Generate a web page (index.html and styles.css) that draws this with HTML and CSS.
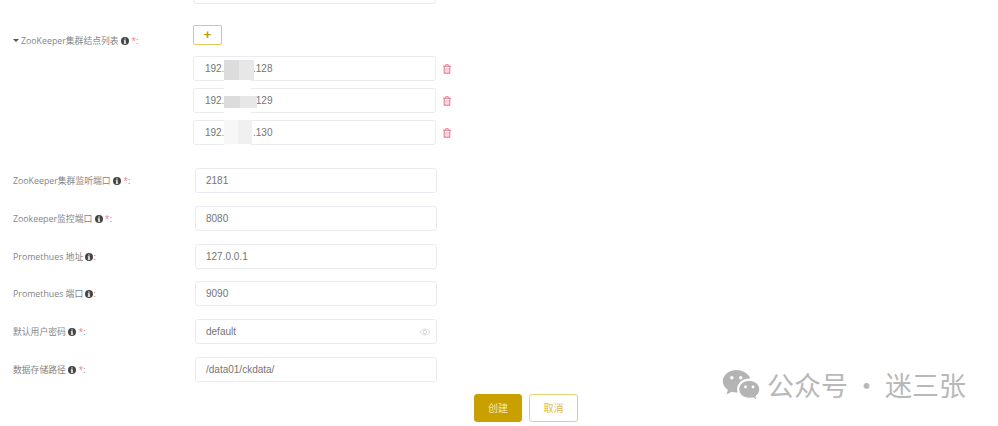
FILE: index.html
```html
<!DOCTYPE html>
<html>
  <head>
    <title>创建集群</title>
    <link rel="stylesheet" href="styles.css">
  </head>
  <body>
    <svg class="icon-defs" width="0" height="0">
      <symbol id="info" viewBox="0 0 16 16">
        <path fill-rule="evenodd" d="M8 0a8 8 0 1 0 0 16A8 8 0 0 0 8 0zM6.6 2.8h2.8v2.400H6.600zM5.600 6.600h3.800v5h1v1.800H5.600v-1.800h1V8.400h-1z"/>
      </symbol>
      <symbol id="trash" viewBox="0 0 12 14">
        <path fill-rule="evenodd" d="M4 0h4l1 2h3v1.600h-1V13a1 1 0 0 1-1 1H2a1 1 0 0 1-1-1V3.600H0V2h3zM4.800 1.200 4.400 2h3.200l-.4-.8zM2.600 3.600v8.800h6.800V3.600zM4 5h1v6H4zm3 0h1v6H7z"/>
      </symbol>
    </svg>

    <div class="form">
      <div class="cut-row"><div class="input-cut"></div></div>

      <div class="row row-nodes">
        <label class="label label-nodes">
          <span class="caret"></span>ZooKeeper集群结点列表
          <svg class="info"><use href="#info"/></svg>
          <span class="req">*</span>:
        </label>
        <div class="nodes">
          <button class="btn-add">+</button>
          <div class="node"><div class="input">192.1<span class="gap"></span>.128</div><svg class="trash"><use href="#trash"/></svg></div>
          <div class="node"><div class="input">192.1<span class="gap"></span>.129</div><svg class="trash"><use href="#trash"/></svg></div>
          <div class="node"><div class="input">192.1<span class="gap"></span>.130</div><svg class="trash"><use href="#trash"/></svg></div>
        </div>
      </div>

      <div class="row">
        <label class="label">ZooKeeper集群监听端口 <svg class="info"><use href="#info"/></svg> <span class="req">*</span>:</label>
        <div class="input">2181</div>
      </div>
      <div class="row">
        <label class="label">Zookeeper监控端口 <svg class="info"><use href="#info"/></svg> <span class="req">*</span>:</label>
        <div class="input">8080</div>
      </div>
      <div class="row">
        <label class="label">Promethues 地址 <svg class="info"><use href="#info"/></svg>:</label>
        <div class="input">127.0.0.1</div>
      </div>
      <div class="row">
        <label class="label">Promethues 端口 <svg class="info"><use href="#info"/></svg>:</label>
        <div class="input">9090</div>
      </div>
      <div class="row">
        <label class="label">默认用户密码 <svg class="info"><use href="#info"/></svg> <span class="req">*</span>:</label>
        <div class="input input-pass">default
          <svg class="eye" viewBox="0 0 16 12"><path d="M.8 6C2.600 2.800 5 1.200 8 1.200s5.400 1.600 7.200 4.800C13.400 9.200 11 10.800 8 10.800S2.600 9.200.8 6z"/><circle cx="8" cy="6" r="2.800"/></svg>
        </div>
      </div>
      <div class="row">
        <label class="label">数据存储路径 <svg class="info"><use href="#info"/></svg> <span class="req">*</span>:</label>
        <div class="input">/data01/ckdata/</div>
      </div>

      <div class="actions">
        <button class="btn btn-primary">创建</button>
        <button class="btn btn-ghost">取消</button>
      </div>
    </div>

    <!-- mosaic over the hidden part of the addresses -->
    <div class="patch"></div>
    <div class="smudge smudge-1"></div>
    <div class="smudge smudge-2"></div>
    <div class="smudge smudge-3"></div>

    <div class="watermark">
      <svg class="wechat" viewBox="0 0 38 32">
        <path d="M14.500 1C6.800 1 .8 6 .8 12.300c0 3.500 1.900 6.500 5 8.600L4.400 25.500l5.200-2.800c1.600.5 3.200.7 4.900.7h1.100a10.500 10.500 0 0 1-.5-3.100c0-6 5.500-10.700 12.300-10.700h.9C26.600 4.700 21 1 14.500 1z"/>
        <path d="M27.200 11.400c-5.800 0-10.400 4-10.400 8.900s4.600 8.900 10.400 8.900c1.200 0 2.400-.2 3.500-.5l4.200 2.300-1.100-3.800c2.400-1.700 3.900-4.200 3.900-6.900 0-4.900-4.700-8.900-10.500-8.900z" stroke="#fff" stroke-width="1"/>
        <circle cx="9.800" cy="8.800" r="1.700" fill="#fff"/>
        <circle cx="18.800" cy="8.800" r="1.700" fill="#fff"/>
        <circle cx="23.500" cy="18" r="1.400" fill="#fff"/>
        <circle cx="31" cy="18" r="1.400" fill="#fff"/>
      </svg>
      <span>公众号 · 迷三张</span>
    </div>
  </body>
</html>
```
FILE: styles.css
```css
html,
body {
  height: 100%;
  margin: 0;
  overflow: hidden;
  background-color: #fff;
}
body {
  font-family: "Open Sans", "Noto Sans CJK SC", sans-serif;
}
.icon-defs {
  display: block;
}
.form {
  width: 600px;
  display: flex;
  flex-direction: column;
}
.cut-row {
  padding-left: 193px;
  height: 25px;
}
.input-cut {
  width: 243px;
  height: 4px;
  box-sizing: border-box;
  border: 1px solid #e9ebf0;
  border-top: none;
  border-radius: 0 0 4px 4px;
}
.row {
  display: flex;
  align-items: center;
  height: 25px;
  margin-bottom: 12.8px;
  padding-left: 13px;
}
.row-nodes {
  height: auto;
  align-items: flex-start;
  margin-bottom: 23px;
}
.label {
  width: 182px;
  flex: none;
  font-size: 8.8px;
  color: #858585;
  white-space: nowrap;
}
.label-nodes {
  width: 180px;
  margin-top: 9px;
}
.caret {
  display: inline-block;
  border: 3px solid transparent;
  border-top: 3px solid #555;
  border-bottom: none;
  margin-right: 2px;
  vertical-align: 2px;
}
.info {
  width: 8px;
  height: 8px;
  fill: #444;
  vertical-align: -1px;
}
.req {
  color: #e8808f;
}
.input {
  width: 242px;
  height: 25px;
  box-sizing: border-box;
  border: 1px solid #e9ebf0;
  border-radius: 3px;
  padding-left: 10px;
  font-family: "Liberation Sans", sans-serif;
  font-size: 10px;
  line-height: 24px;
  color: #757575;
  flex: none;
}
.input-pass {
  position: relative;
}
.eye {
  position: absolute;
  right: 6px;
  top: 8px;
  width: 10px;
  height: 8px;
  fill: none;
  stroke: #c9ccd2;
  stroke-width: 1.2;
}
.gap {
  display: inline-block;
  width: 23px;
}
.nodes {
  display: flex;
  flex-direction: column;
  gap: 7px;
}
.nodes .input {
  width: 243px;
  padding-left: 11px;
}
.btn-add {
  width: 29px;
  height: 20px;
  margin-bottom: 4px;
  padding: 0;
  border: 1px solid #e2c864;
  border-radius: 2px;
  background-color: #fff;
  color: #c49c00;
  font-family: "Liberation Sans", sans-serif;
  font-size: 13px;
  font-weight: bold;
  line-height: 16px;
}
.node {
  display: flex;
  align-items: center;
  gap: 7px;
}
.trash {
  width: 8px;
  height: 10px;
  fill: #e8798e;
}
.actions {
  display: flex;
  gap: 7px;
  margin-top: -1px;
  padding-left: 474px;
}
.btn {
  width: 48px;
  height: 28px;
  box-sizing: border-box;
  padding: 0;
  border-radius: 3px;
  font-family: "Noto Sans CJK SC", sans-serif;
  font-size: 10px;
}
.btn-primary {
  border: 1px solid #c9a000;
  background-color: #c9a000;
  color: #f4e6b0;
}
.btn-ghost {
  width: 49px;
  border: 1px solid #e6cf77;
  background-color: #fff;
  color: #dcb93f;
}
.patch {
  position: absolute;
  left: 224px;
  top: 60px;
  width: 27px;
  height: 86px;
  background-color: #fff;
  filter: blur(1px);
}
.smudge {
  position: absolute;
  left: 224px;
  width: 30px;
  height: 20px;
  background-image: linear-gradient(to right, #dcdcdc 50%, #e7e7e7 50%);
}
.smudge-1 {
  top: 60px;
}
.smudge-2 {
  top: 96px;
  width: 33px;
  height: 12px;
}
.smudge-3 {
  top: 120px;
  width: 28px;
  height: 24px;
  background-image: linear-gradient(to right, #f7f7f7 50%, #f0f0f0 50%);
}
.watermark {
  position: absolute;
  left: 722px;
  top: 369px;
  display: flex;
  align-items: center;
  gap: 7px;
  font-family: "Noto Sans CJK SC", sans-serif;
  font-size: 27px;
  word-spacing: -1px;
  line-height: 32px;
  color: #b8b8b8;
  white-space: nowrap;
}
.wechat {
  width: 38px;
  height: 32px;
  fill: #b4b4b4;
}
```
